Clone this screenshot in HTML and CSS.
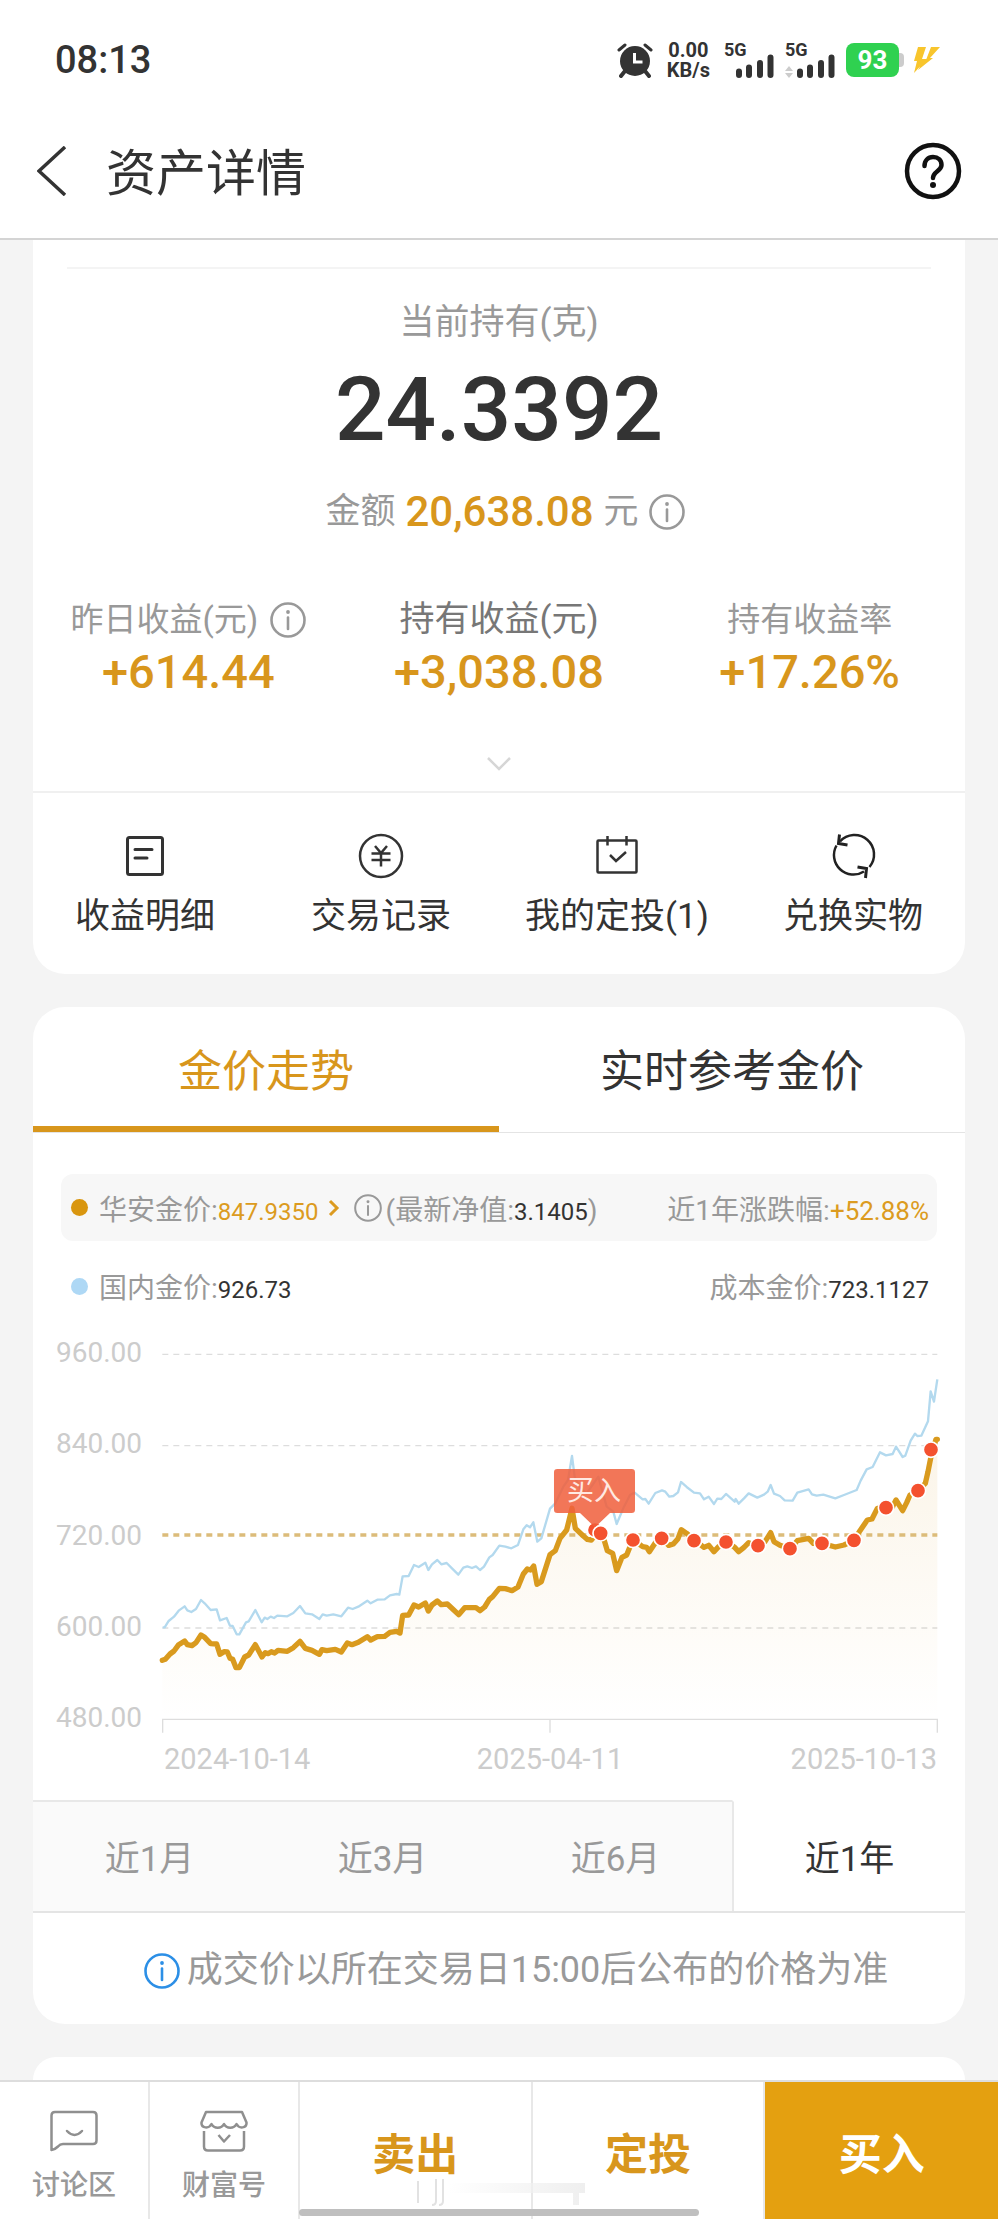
FILE: index.html
```html
<!DOCTYPE html>
<html lang="zh-CN">
<head>
    <meta charset="UTF-8">
    <meta name="viewport" content="width=device-width, initial-scale=1.0">
    <title>资产详情</title>
    <link rel="stylesheet" href="styles.css">
</head>
<body>
    <!-- icons used more than once -->
    <svg class="defs" width="0" height="0">
        <symbol id="info" viewBox="0 0 36 36">
            <circle cx="18" cy="18" r="16.5" fill="none" stroke="currentColor" stroke-width="2.6"/>
            <path d="M18 15.500V27" stroke="currentColor" stroke-width="2.6" stroke-linecap="round"/>
            <circle cx="18" cy="10" r="1.900" fill="currentColor"/>
        </symbol>
        <symbol id="bars" viewBox="0 0 38 24">
            <path d="M3 17.500V21M13 13.500V21M24 9V21M34.500 3.500V21" stroke="currentColor" stroke-width="6" stroke-linecap="round"/>
        </symbol>
    </svg>

    <div class="status">
        <span class="time">08:13</span>
        <div class="status-icons">
            <svg class="alarm" viewBox="0 0 36 36">
                <circle cx="18" cy="19" r="15" fill="#333"/>
                <path d="M2 8l6-5M34 8l-6-5" stroke="#333" stroke-width="3" stroke-linecap="round"/>
                <path d="M8 29l-4 5M28 29l4 5" stroke="#333" stroke-width="4" stroke-linecap="round"/>
                <path d="M17.500 11v9h8" fill="none" stroke="#fff" stroke-width="3"/>
            </svg>
            <div class="speed">0.00<br>KB/s</div>
            <div class="signal">
                <span>5G</span>
                <svg><use href="#bars"/></svg>
            </div>
            <div class="signal second">
                <span>5G</span>
                <svg><use href="#bars"/></svg>
                <svg class="updown" viewBox="0 0 8 12"><path d="M4 0l4 5H0zM4 12l4-5H0z" fill="#ccc"/></svg>
            </div>
            <div class="battery">93</div>
            <svg class="bolt" viewBox="0 0 28 28"><path d="M5 1h8L9 13h5L1 27l3-12H1zM18 1h9L17 12h3L5 24l6-10h2z" fill="#f8c52c"/></svg>
        </div>
    </div>

    <header class="header">
        <a href="#" class="back" aria-label="返回">
            <svg viewBox="0 0 30 50"><path d="M28 1L2 25l26 24" fill="none" stroke="#333" stroke-width="3.500"/></svg>
        </a>
        <h1>资产详情</h1>
        <button class="help" aria-label="帮助">
            <svg viewBox="0 0 58 58">
                <circle cx="29" cy="29" r="26" fill="none" stroke="#111" stroke-width="4.500"/>
                <path d="M20.500 24c0-5.500 3.500-9 8.500-9s8.500 3.300 8.500 8c0 6-8.500 6.500-8.500 13" fill="none" stroke="#111" stroke-width="4.500" stroke-linecap="round"/>
                <circle cx="29" cy="43" r="3" fill="#111"/>
            </svg>
        </button>
    </header>

    <main>
        <section class="card assets">
            <div class="line"></div>
            <p class="hold-label">当前持有(克)</p>
            <p class="hold">24.3392</p>
            <p class="amount">金额 <b>20,638.08</b> 元 <svg class="info"><use href="#info"/></svg></p>
            <dl class="stats">
                <div>
                    <dt>昨日收益(元) <svg class="info"><use href="#info"/></svg></dt>
                    <dd>+614.44</dd>
                </div>
                <div class="main-stat">
                    <dt>持有收益(元)</dt>
                    <dd>+3,038.08</dd>
                </div>
                <div>
                    <dt>持有收益率</dt>
                    <dd>+17.26%</dd>
                </div>
            </dl>
            <button class="more" aria-label="展开">
                <svg viewBox="0 0 26 14"><path d="M2 1l11 11L24 1" fill="none" stroke="#d6d6d6" stroke-width="2.500"/></svg>
            </button>
            <nav class="actions">
                <a href="#">
                    <svg viewBox="0 0 48 48" fill="none" stroke="#333" stroke-width="3">
                        <rect x="6.500" y="5.500" width="35" height="37" rx="2"/>
                        <path d="M14 17.500h17M14 26h12" stroke-linecap="round"/>
                    </svg>
                    收益明细
                </a>
                <a href="#">
                    <svg viewBox="0 0 48 48" fill="none" stroke="#333" stroke-width="2.500">
                        <circle cx="24" cy="24" r="21"/>
                        <path d="M18 14l6 7 6-7M14.500 21.500h19M14.500 28h19M24 21v13.500"/>
                    </svg>
                    交易记录
                </a>
                <a href="#">
                    <svg viewBox="0 0 48 48" fill="none" stroke="#333" stroke-width="2.500">
                        <rect x="4.500" y="8.500" width="39" height="32" rx="1"/>
                        <path d="M14.500 4v9.500M33.500 4v9.500M17 23l6 6 10-9"/>
                    </svg>
                    我的定投(1)
                </a>
                <a href="#">
                    <svg viewBox="0 0 48 48" fill="none" stroke="#222" stroke-width="2.500">
                        <path d="M11 9.500A19.500 19.500 0 0 1 40.500 35M35 39.500A19.500 19.500 0 0 1 7.500 13.500"/>
                        <path d="M10.500 2.500l-1 9 9 1.500M36.500 46l1-9.500-9-1.500" stroke-width="3"/>
                    </svg>
                    兑换实物
                </a>
            </nav>
        </section>

        <section class="card trend">
            <div class="tabs">
                <button class="on">金价走势</button>
                <button>实时参考金价</button>
            </div>
            <div class="price">
                <i class="dot"></i>
                <span>华安金价:<a href="#" class="gold">847.9350</a></span>
                <svg class="arrow" viewBox="0 0 12 18"><path d="M2 2l7 7-7 7" fill="none" stroke="#dc9b20" stroke-width="3"/></svg>
                <svg class="info"><use href="#info"/></svg>
                <span>(最新净值:<em>3.1405</em>)</span>
                <span class="right">近1年涨跌幅:<em class="gold rate">+52.88%</em></span>
            </div>
            <div class="price plain">
                <i class="dot blue"></i>
                <span>国内金价:<em>926.73</em></span>
                <span class="right">成本金价:<em>723.1127</em></span>
            </div>

            <svg class="chart" viewBox="0 0 932 480">
                <defs>
                    <linearGradient id="fade" x1="0" y1="0" x2="0" y2="1">
                        <stop offset="0" stop-color="#d8961c" stop-opacity=".1"/>
                        <stop offset="1" stop-color="#d8961c" stop-opacity="0"/>
                    </linearGradient>
                </defs>
                <g class="y-axis">
                    <text x="109" y="42">960.00</text>
                    <text x="109" y="133">840.00</text>
                    <text x="109" y="225">720.00</text>
                    <text x="109" y="316">600.00</text>
                    <text x="109" y="407">480.00</text>
                </g>
                <g class="x-axis">
                    <text x="131" y="449">2024-10-14</text>
                    <text x="517" y="449" text-anchor="middle">2025-04-11</text>
                    <text x="904" y="449" text-anchor="end">2025-10-13</text>
                </g>
                <!-- plot area is drawn at three units per pixel -->
                <g transform="translate(-3) scale(.33333)">
                    <path class="grid" d="M397 103H2722M397 377H2722M397 924H2722"/>
                    <path class="base" d="M398 1238V1198H2722V1238M1560 1198V1238"/>
                    <path fill="url(#fade)" d="M397 1021L446 974 464 963 486 977 513 945 542 971 560 972 570 1003 592 996 618 1043 628 1043 656 1005 676 974 696 1011 772 994 810 964 846 991 868 1003 934 996 952 969 1012 950 1064 949 1110 939 1118 886 1152 855 1222 843 1252 852 1286 884 1304 863 1350 872 1408 805 1446 812 1464 801 1492 747 1512 738 1522 793 1560 704 1590 655 1626 565 1636 625 1672 658 1712 638 1760 752 1810 660 1858 695 1896 655 1954 629 2022 682 2052 695 2088 665 2126 695 2183 677 2222 638 2280 687 2336 655 2376 670 2416 681 2472 661 2512 600 2568 563 2598 540 2618 572 2664 512 2686 490 2702 415 2722 358V1198H397z"/>
                    <path class="cost" d="M397 645H2722"/>
                    <polyline class="home-line" points="398,922 404,922 416,903 432,890 446,872 464,859 472,871 484,876 498,867 513,840 524,850 542,870 560,868 570,901 590,894 600,917 608,918 620,943 628,943 648,907 656,904 676,870 695,907 704,893 712,897 722,890 732,894 742,887 772,889 790,879 810,858 826,880 846,883 868,897 878,883 890,887 910,883 934,889 954,863 968,867 985,860 1012,842 1022,850 1042,839 1064,838 1080,826 1100,822 1108,824 1118,769 1136,768 1152,735 1166,741 1186,728 1195,750 1206,733 1222,720 1234,733 1250,729 1266,745 1285,764 1300,743 1312,739 1326,744 1338,739 1350,750 1362,740 1378,712 1388,705 1408,677 1426,680 1444,685 1464,675 1480,628 1490,616 1500,622 1510,607 1522,665 1534,655 1560,566 1576,550 1600,500 1614,480 1626,408 1634,470 1650,505 1670,520 1705,470 1730,560 1750,575 1760,612 1782,560 1800,525 1814,518 1838,538 1846,537 1856,551 1876,519 1896,511 1906,515 1918,530 1930,528 1944,517 1953,486 1970,501 1992,518 2010,520 2022,538 2036,530 2052,552 2062,536 2074,537 2088,522 2114,545 2117,537 2126,551 2142,535 2156,520 2182,533 2202,524 2213,515 2222,495 2232,521 2250,528 2264,541 2288,542 2302,518 2336,508 2346,523 2360,527 2380,524 2416,535 2442,525 2480,510 2492,482 2510,448 2528,441 2550,397 2568,406 2588,402 2598,380 2618,411 2626,407 2642,362 2655,341 2662,348 2674,347 2694,304 2702,214 2712,245 2722,178"/>
                    <polyline class="gold-line" points="397,1021 406,1018 420,1002 432,993 446,974 464,963 472,974 486,977 498,968 513,945 524,952 542,971 560,972 570,1003 582,995 592,996 600,1015 608,1018 618,1043 628,1043 644,1011 656,1005 676,974 696,1011 706,998 714,1001 724,995 734,999 744,991 772,994 790,983 810,964 826,985 846,991 868,1003 876,989 890,992 916,988 934,996 952,969 966,974 985,967 1012,950 1022,960 1042,950 1064,949 1080,937 1100,934 1110,939 1118,886 1136,885 1152,855 1166,861 1186,849 1195,873 1206,855 1222,843 1234,854 1252,852 1268,867 1286,884 1304,863 1338,863 1350,872 1364,861 1378,838 1388,830 1408,805 1426,806 1446,812 1464,801 1480,762 1492,747 1502,750 1511,738 1521,793 1534,785 1560,704 1576,692 1590,655 1610,630 1626,565 1636,625 1660,648 1672,658 1684,660 1700,640 1712,638 1724,665 1732,692 1748,700 1760,752 1776,712 1790,705 1800,680 1810,660 1838,680 1850,682 1858,695 1876,668 1896,655 1916,676 1930,672 1944,656 1954,629 1970,640 1992,660 2010,673 2022,682 2036,676 2052,695 2066,680 2088,665 2114,682 2126,695 2142,682 2156,668 2183,677 2205,665 2222,638 2232,665 2250,676 2280,687 2302,662 2336,655 2350,670 2376,670 2416,681 2442,675 2472,661 2490,632 2512,600 2526,597 2542,565 2568,563 2588,560 2598,540 2618,572 2630,548 2640,525 2664,512 2686,490 2694,455 2702,415 2706,400 2718,358 2722,358"/>
                    <g class="buys">
                        <circle cx="1695" cy="630" r="23"/>
                        <circle cx="1712" cy="640" r="23"/>
                        <circle cx="1809" cy="660" r="23"/>
                        <circle cx="1895" cy="655" r="23"/>
                        <circle cx="1992" cy="662" r="23"/>
                        <circle cx="2088" cy="666" r="23"/>
                        <circle cx="2184" cy="677" r="23"/>
                        <circle cx="2280" cy="686" r="23"/>
                        <circle cx="2376" cy="670" r="23"/>
                        <circle cx="2472" cy="661" r="23"/>
                        <circle cx="2568" cy="563" r="23"/>
                        <circle cx="2664" cy="512" r="23"/>
                        <circle cx="2703" cy="389" r="23"/>
                    </g>
                    <path class="tip" d="M1582 447H1805Q1815 447 1815 457V569Q1815 579 1805 579H1740L1695 622 1650 579H1582Q1572 579 1572 569V457Q1572 447 1582 447z"/>
                </g>
                <text class="tip-text" x="561" y="180">买入</text>
            </svg>

            <div class="periods">
                <button>近1月</button>
                <button>近3月</button>
                <button>近6月</button>
                <button class="on">近1年</button>
            </div>
            <p class="note"><svg class="info"><use href="#info"/></svg>成交价以所在交易日15:00后公布的价格为准</p>
        </section>

        <section class="card next"></section>
    </main>

    <footer class="footer">
        <a href="#" class="small">
            <svg viewBox="0 0 48 42" fill="none" stroke="#8f8f8f" stroke-width="2.500" stroke-linejoin="round">
                <path d="M5 2h38q3.500 0 3.500 3.500v25q0 3.500-3.500 3.500H13q-3 0-5 2.500-3 3-6.500 3.500V5.500Q1.500 2 5 2z"/>
                <path d="M17 21q7.500 8 15 0" stroke-linecap="round"/>
            </svg>
            讨论区
        </a>
        <a href="#" class="small">
            <svg viewBox="0 0 48 42" fill="none" stroke="#8f8f8f" stroke-width="2.500" stroke-linejoin="round">
                <path d="M6 2h36l4.500 10.500c.5 6-7.500 6.500-10 1.500-2.500 5-10 5-12.500 0-2.500 5-10 5-12.500 0-2.500 5-10.500 4.500-10-1.500z"/>
                <path d="M4 21v15.500q0 4 4 4h32q4 0 4-4V21M18.500 25l5.500 6.500 6-6.500"/>
            </svg>
            财富号
        </a>
        <button>卖出</button>
        <button>定投</button>
        <button class="buy">买入</button>
        <svg class="ghost" viewBox="0 0 174 34">
            <defs>
                <linearGradient id="smear"><stop offset="0" stop-color="#fff"/><stop offset="1" stop-color="#e8e8e8"/></linearGradient>
            </defs>
            <path d="M34 8h136v10H34zM158 18h6v12h-6z" fill="url(#smear)" opacity=".7"/>
            <path d="M3 6v22M21 4v22q0 4-4 4M28 4v22q0 4-4 4" fill="none" stroke="#e2e2e2" stroke-width="2"/>
        </svg>
        <div class="home-bar"></div>
    </footer>
</body>
</html>
```
FILE: styles.css
```css
* {
    margin: 0;
    padding: 0;
    box-sizing: border-box;
}
a {
    text-decoration: none;
    color: inherit;
}
button {
    border: 0;
    background: transparent;
    font: inherit;
    color: inherit;
    cursor: pointer;
}
em, i {
    font-style: normal;
}
svg {
    display: block;
    flex: none;
}
body {
    display: flex;
    flex-direction: column;
    min-height: 100vh;
    background: #f4f4f4;
    color: #333;
    font-family: Roboto, "Noto Sans CJK SC", sans-serif;
}
.defs {
    position: absolute;
}

/* status bar */
.status {
    display: flex;
    align-items: center;
    justify-content: space-between;
    height: 104px;
    padding: 16px 57px 0 55px;
    background: #fff;
}
.time {
    font-size: 38px;
    font-weight: 500;
}
.status-icons {
    display: flex;
    align-items: center;
}
.alarm {
    width: 36px;
    height: 36px;
}
.speed {
    margin: 0 14px 0 14px;
    font-size: 20px;
    font-weight: 700;
    line-height: 20px;
    text-align: center;
}
.signal {
    position: relative;
    width: 50px;
    height: 36px;
    margin-right: 11px;
    font-size: 18px;
    font-weight: 700;
    line-height: 16px;
}
.signal svg {
    position: absolute;
    right: 0;
    bottom: 0;
    width: 38px;
    height: 24px;
}
.signal .updown {
    right: auto;
    left: 0;
    width: 8px;
    height: 12px;
}
.battery {
    position: relative;
    width: 53px;
    height: 34px;
    border-radius: 8px;
    background: #2fd150;
    color: #fff;
    font-size: 26px;
    font-weight: 700;
    line-height: 34px;
    text-align: center;
}
.battery::after {
    content: "";
    position: absolute;
    left: 53px;
    top: 10px;
    width: 5px;
    height: 14px;
    border-radius: 0 4px 4px 0;
    background: #ccc;
}
.bolt {
    width: 28px;
    height: 28px;
    margin-left: 14px;
}

/* title bar */
.header {
    display: flex;
    align-items: center;
    height: 136px;
    padding: 0 36px 0 37px;
    border-bottom: 2px solid #d4d4d4;
    background: #fff;
}
.back svg {
    width: 30px;
    height: 50px;
}
.header h1 {
    flex: 1;
    margin-left: 39px;
    padding-bottom: 4px;
    font-size: 50px;
    font-weight: 400;
}
.help svg {
    width: 58px;
    height: 58px;
}

/* cards */
main {
    display: flex;
    flex: 1;
    flex-direction: column;
    gap: 33px;
    padding: 0 33px;
}
.card {
    border-radius: 32px;
    background: #fff;
    overflow: hidden;
}
.info {
    width: 36px;
    height: 36px;
    color: #999;
}
.assets {
    padding-bottom: 33px;
    border-radius: 0 0 32px 32px;
    text-align: center;
}
.line {
    height: 2px;
    margin: 27px 34px 0;
    background: #f4f4f4;
}
.hold-label {
    margin-top: 30px;
    color: #999;
    font-size: 35px;
    line-height: 48px;
}
.hold {
    margin-top: 13px;
    font-size: 89px;
    font-weight: 500;
    line-height: 100px;
}
.amount {
    display: flex;
    align-items: center;
    justify-content: center;
    gap: 10px;
    margin-top: 22px;
    padding-left: 12px;
    color: #999;
    font-size: 35px;
    line-height: 60px;
}
.amount b {
    color: #d8961c;
    font-size: 42px;
    font-weight: 500;
}
.stats {
    display: grid;
    grid-template-columns: repeat(3, 1fr);
    margin-top: 54px;
}
.stats dt {
    display: flex;
    align-items: center;
    justify-content: center;
    gap: 12px;
    color: #999;
    font-size: 33px;
    line-height: 48px;
}
.stats .main-stat dt {
    color: #777;
    font-size: 35px;
}
.stats dd {
    color: #d8961c;
    font-size: 47px;
    font-weight: 500;
    line-height: 56px;
}
.more {
    display: block;
    width: 100%;
    padding: 57px 0 20px;
    border-bottom: 2px solid #f0f0f0;
}
.more svg {
    width: 26px;
    height: 14px;
    margin: 0 auto;
}
.actions {
    display: grid;
    grid-template-columns: repeat(4, 1fr);
    margin: 39px -6px 0;
    font-size: 35px;
    line-height: 48px;
}
.actions svg {
    width: 48px;
    height: 48px;
    margin: 0 auto 13px;
}

/* price trend */
.tabs {
    display: grid;
    grid-template-columns: 1fr 1fr;
    border-bottom: 1px solid #e4e4e4;
}
.tabs button {
    padding-top: 11px;
    border-bottom: 6px solid transparent;
    font-size: 44px;
    line-height: 108px;
}
.tabs .on {
    border-color: #d8961c;
    color: #d8961c;
}
.price {
    display: flex;
    align-items: center;
    height: 67px;
    margin: 41px 28px 0;
    padding: 0 8px 0 10px;
    border-radius: 12px;
    background: #f7f7f7;
    color: #999;
    font-size: 28px;
}
.price.plain {
    height: 40px;
    margin-top: 25px;
    background: transparent;
}
.dot {
    width: 17px;
    height: 17px;
    margin-right: 11px;
    border-radius: 50%;
    background: #d9960f;
}
.dot.blue {
    background: #aed8f5;
}
.price em, .price a {
    color: #333;
    font-size: 24px;
}
.price .gold {
    color: #dc9b20;
}
.price .rate {
    font-size: 26px;
}
.arrow {
    width: 12px;
    height: 18px;
    margin: 0 14px 0 9px;
}
.price .info {
    width: 28px;
    height: 28px;
    margin-right: 4px;
}
.price .right {
    margin-left: auto;
}
.chart {
    width: 100%;
    margin-top: 14px;
}
.y-axis, .x-axis {
    fill: #ccc;
    font-size: 28px;
}
.y-axis {
    text-anchor: end;
}
.x-axis {
    font-size: 29px;
}
.grid, .base, .cost {
    fill: none;
    stroke: #ddd;
    stroke-width: 4;
}
.grid {
    stroke-dasharray: 18 15;
}
.cost {
    stroke: #dcbc7a;
    stroke-width: 10;
    stroke-dasharray: 18 15;
}
.home-line, .gold-line {
    fill: none;
    stroke: #b3d9ee;
    stroke-width: 7;
    stroke-linejoin: round;
}
.gold-line {
    stroke: #d99a1e;
    stroke-width: 16;
    stroke-linecap: round;
}
.buys {
    fill: #f4512f;
    stroke: #fff;
    stroke-width: 5;
}
.tip {
    fill: #f0603c;
    fill-opacity: .86;
}
.tip-text {
    fill: #ffe9e2;
    font-size: 27px;
    text-anchor: middle;
}
.periods {
    display: grid;
    grid-template-columns: repeat(4, 1fr);
    border-bottom: 2px solid #e4e4e4;
}
.periods button {
    padding-top: 6px;
    border-top: 2px solid #e8e8e8;
    background: #fafafa;
    color: #999;
    font-size: 35px;
    line-height: 103px;
}
.periods .on {
    border-top-color: #fff;
    border-left: 2px solid #e8e8e8;
    background: #fff;
    color: #333;
}
.note {
    display: flex;
    align-items: center;
    justify-content: center;
    gap: 7px;
    padding: 4px 0 0 34px;
    color: #999;
    font-size: 36px;
    line-height: 107px;
}
.note .info {
    color: #2c8fe6;
}
.next {
    flex: 1;
    min-height: 23px;
    border-radius: 32px 32px 0 0;
}

/* bottom bar */
.footer {
    position: relative;
    display: grid;
    grid-template-columns: 150px 150px 1fr 1fr 1fr;
    height: 139px;
    border-top: 2px solid #ddd;
    background: #fff;
}
.footer > a, .footer > button {
    border-right: 2px solid #e8e8e8;
}
.footer .small {
    padding-top: 28px;
    color: #999;
    font-size: 28px;
    font-weight: 500;
    line-height: 32px;
    text-align: center;
}
.small svg {
    width: 48px;
    height: 42px;
    margin: 0 auto 18px;
}
.footer button {
    color: #d8961c;
    font-size: 43px;
    font-weight: 700;
}
.footer .buy {
    border-right: 0;
    background: #e4a010;
    color: #fff;
}
.ghost {
    position: absolute;
    left: 415px;
    bottom: 10px;
    width: 174px;
    height: 34px;
}
.home-bar {
    position: absolute;
    left: 30%;
    right: 30%;
    bottom: 3px;
    height: 7px;
    border-radius: 4px;
    background: #bfbfbf;
}
```
